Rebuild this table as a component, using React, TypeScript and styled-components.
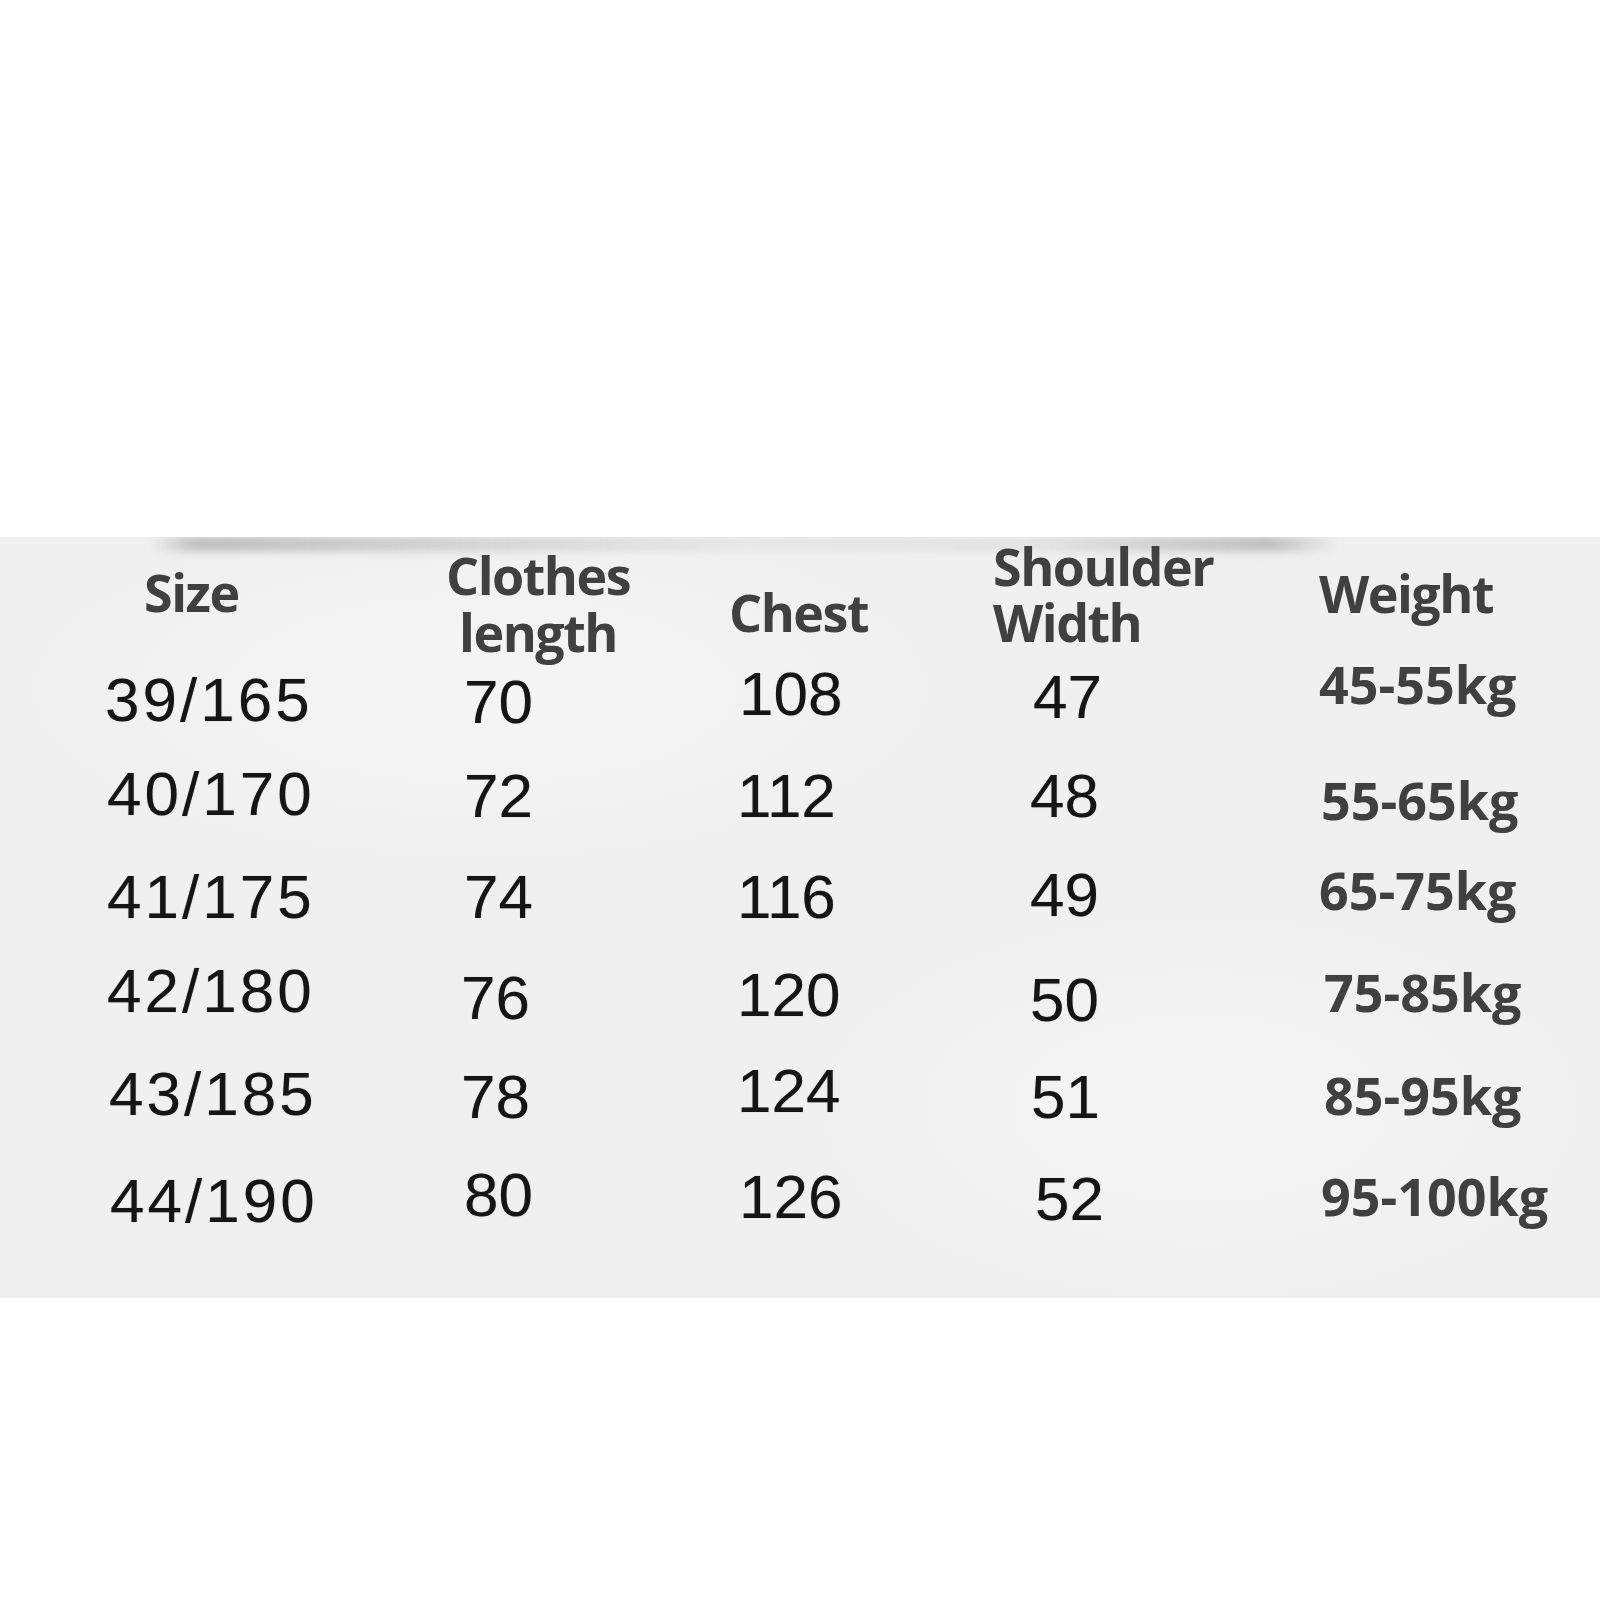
import styled, { createGlobalStyle } from 'styled-components'

const GlobalStyle = createGlobalStyle`
  html, body {
    margin: 0;
    padding: 0;
    background: #ffffff;
  }
  #root {
    width: 1600px;
    min-height: 1600px;
  }
`

type Cell = { text: string; x: number; dy: number }

const HEADER_FONT = `'Open Sans', 'Noto Sans', sans-serif`
const NUMBER_FONT = `'Liberation Sans', Arial, sans-serif`

// x = offset from column start, dy = small vertical jitter from the scan
const SIZES: Cell[] = [
  { text: '39/165', x: 5, dy: 2 },
  { text: '40/170', x: 7, dy: -3 },
  { text: '41/175', x: 7, dy: 0 },
  { text: '42/180', x: 7, dy: -5 },
  { text: '43/185', x: 9, dy: -2 },
  { text: '44/190', x: 10, dy: 6 },
]

const LENGTHS: Cell[] = [
  { text: '70', x: 19, dy: 4 },
  { text: '72', x: 19, dy: -1 },
  { text: '74', x: 19, dy: 0 },
  { text: '76', x: 16, dy: 2 },
  { text: '78', x: 16, dy: 1 },
  { text: '80', x: 19, dy: 0 },
]

const CHESTS: Cell[] = [
  { text: '108', x: 19, dy: -4 },
  { text: '112', x: 17, dy: -1 },
  { text: '116', x: 17, dy: 0 },
  { text: '120', x: 17, dy: -1 },
  { text: '124', x: 17, dy: -5 },
  { text: '126', x: 19, dy: 2 },
]

const SHOULDERS: Cell[] = [
  { text: '47', x: 43, dy: -1 },
  { text: '48', x: 40, dy: -1 },
  { text: '49', x: 40, dy: -2 },
  { text: '50', x: 40, dy: 4 },
  { text: '51', x: 41, dy: 1 },
  { text: '52', x: 45, dy: 4 },
]

const WEIGHTS: Cell[] = [
  { text: '45-55kg', x: 9, dy: -14 },
  { text: '55-65kg', x: 11, dy: 3 },
  { text: '65-75kg', x: 9, dy: -7 },
  { text: '75-85kg', x: 14, dy: -4 },
  { text: '85-95kg', x: 14, dy: -1 },
  { text: '95-100kg', x: 11, dy: 1 },
]

export default function App() {
  const rows = SIZES.map((_, i) => i)
  return (
    <>
      <GlobalStyle />
      <Page>
        <Panel>
          <TopShadow />
          <Table>
            <Header $x={44} $dy={0}>
              Size
            </Header>
            <Header $x={1} $dy={10} $lineHeight={57} $center>
              Clothes
              <br />
              length
            </Header>
            <Header $x={9} $dy={20}>
              Chest
            </Header>
            <Header $x={3} $dy={1} $lineHeight={56}>
              Shoulder
              <br />
              Width
            </Header>
            <Header $x={9} $dy={1}>
              Weight
            </Header>

            {rows.map((i) => (
              <Row key={i}>
                <Num $x={SIZES[i].x} $dy={SIZES[i].dy} $spacing={3}>
                  {SIZES[i].text}
                </Num>
                <Num $x={LENGTHS[i].x} $dy={LENGTHS[i].dy}>
                  {LENGTHS[i].text}
                </Num>
                <Num $x={CHESTS[i].x} $dy={CHESTS[i].dy}>
                  {CHESTS[i].text}
                </Num>
                <Num $x={SHOULDERS[i].x} $dy={SHOULDERS[i].dy}>
                  {SHOULDERS[i].text}
                </Num>
                <WeightValue $x={WEIGHTS[i].x} $dy={WEIGHTS[i].dy}>
                  {WEIGHTS[i].text}
                </WeightValue>
              </Row>
            ))}
          </Table>
        </Panel>
      </Page>
    </>
  )
}

const Page = styled.div`
  width: 1600px;
  height: 1600px;
  padding-top: 537px;
  box-sizing: border-box;
  background: #ffffff;
`

const Panel = styled.div`
  position: relative;
  width: 1600px;
  height: 761px;
  box-sizing: border-box;
  background: #f0f0f0;
  background-image: radial-gradient(
      ellipse 700px 260px at 30% 20%,
      rgba(255, 255, 255, 0.35),
      rgba(255, 255, 255, 0) 70%
    ),
    radial-gradient(
      ellipse 600px 300px at 75% 75%,
      rgba(255, 255, 255, 0.3),
      rgba(255, 255, 255, 0) 70%
    );
`

const TopShadow = styled.div`
  position: absolute;
  top: 0;
  left: 150px;
  width: 1190px;
  height: 14px;
  background: linear-gradient(
    90deg,
    rgba(120, 120, 120, 0) 0%,
    rgba(120, 120, 120, 0.45) 4%,
    rgba(130, 130, 130, 0.3) 25%,
    rgba(150, 150, 150, 0.1) 50%,
    rgba(140, 140, 140, 0.15) 75%,
    rgba(120, 120, 120, 0.45) 94%,
    rgba(120, 120, 120, 0) 100%
  );
  filter: blur(5px);
  clip-path: inset(0 -20px -20px -20px);
  pointer-events: none;
`

const Table = styled.div`
  display: grid;
  grid-template-columns: 345px 275px 270px 320px 1fr;
  grid-template-rows: 111px repeat(6, 99.5px);
  padding-left: 100px;
  align-items: center;
`

const Row = styled.div`
  display: contents;
`

const Header = styled.div<{
  $x: number
  $dy: number
  $lineHeight?: number
  $center?: boolean
}>`
  justify-self: start;
  margin-left: ${(p) => p.$x}px;
  transform: translateY(${(p) => p.$dy}px);
  font-family: ${HEADER_FONT};
  font-weight: 700;
  font-size: 52px;
  letter-spacing: -1.5px;
  line-height: ${(p) => (p.$lineHeight ? `${p.$lineHeight}px` : '1.2')};
  text-align: ${(p) => (p.$center ? 'center' : 'left')};
  color: #404040;
  white-space: nowrap;
`

const Num = styled.div<{ $x: number; $dy: number; $spacing?: number }>`
  justify-self: start;
  margin-left: ${(p) => p.$x}px;
  transform: translateY(${(p) => p.$dy}px);
  font-family: ${NUMBER_FONT};
  font-weight: 400;
  font-size: 62px;
  line-height: 1;
  letter-spacing: ${(p) => p.$spacing ?? 0}px;
  color: #151515;
  white-space: nowrap;
  text-shadow: 0 0 1px rgba(0, 0, 0, 0.35);
`

const WeightValue = styled.div<{ $x: number; $dy: number }>`
  justify-self: start;
  margin-left: ${(p) => p.$x}px;
  transform: translateY(${(p) => p.$dy}px);
  font-family: ${HEADER_FONT};
  font-weight: 700;
  font-size: 52px;
  line-height: 1.2;
  letter-spacing: 0;
  color: #404040;
  white-space: nowrap;
`
